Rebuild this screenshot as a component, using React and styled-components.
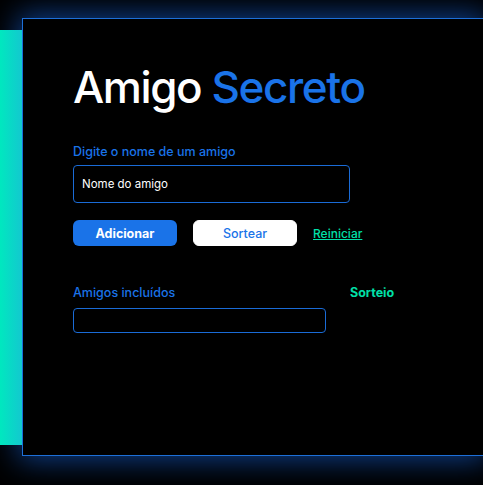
import React from "react";
import styled, { createGlobalStyle } from "styled-components";

const GlobalStyle = createGlobalStyle`
  html, body {
    margin: 0;
    background: #000;
    overflow: hidden;
  }
  body {
    font-family: Inter, "Liberation Sans", sans-serif;
  }
`;

export default function App() {
  return (
    <>
      <GlobalStyle />
      <Stage>
        <TealStrip />
        <Panel>
          <Title>
            Amigo <Highlight>Secreto</Highlight>
          </Title>
          <Label>Digite o nome de um amigo</Label>
          <NameInput placeholder="Nome do amigo" />
          <Actions>
            <PrimaryButton>Adicionar</PrimaryButton>
            <SecondaryButton>Sortear</SecondaryButton>
            <ResetLink href="#">Reiniciar</ResetLink>
          </Actions>
          <Results>
            <FriendsColumn>
              <Label>Amigos incluídos</Label>
              <FriendsList />
            </FriendsColumn>
            <DrawTitle>Sorteio</DrawTitle>
          </Results>
        </Panel>
      </Stage>
    </>
  );
}

const Stage = styled.div`
  display: flex;
  align-items: flex-start;
  width: 100%;
  height: 485px;
  padding-top: 18px;
  box-sizing: border-box;
`;

const TealStrip = styled.div`
  position: relative;
  z-index: 1;
  flex: none;
  width: 22px;
  height: 415px;
  margin-top: 12px;
  background: linear-gradient(90deg, #00e8bf 0%, #13c8cf 100%);
`;

const Panel = styled.div`
  flex: 1;
  min-width: 0;
  height: 438px;
  box-sizing: border-box;
  background: #000;
  border: 1px solid #1d6fd8;
  border-right: none;
  box-shadow: 0 0 28px 4px rgba(22, 96, 210, 0.65);
  padding: 42px 0 0 50px;
  display: flex;
  flex-direction: column;
  align-items: flex-start;
`;

const Title = styled.h1`
  margin: 0 0 31px;
  font-size: 44px;
  font-weight: 500;
  line-height: 52px;
  color: #fff;
  letter-spacing: -1.4px;
  white-space: nowrap;
`;

const Highlight = styled.span`
  color: #1a73e8;
`;

const Label = styled.div`
  font-size: 12.5px;
  font-weight: 500;
  line-height: 16px;
  color: #1a73e8;
  margin-bottom: 5px;
`;

const NameInput = styled.input`
  width: 277px;
  height: 38px;
  box-sizing: border-box;
  background: #000;
  border: 1px solid #1a6bd6;
  border-radius: 4px;
  padding: 0 8px;
  font-family: inherit;
  font-size: 11.5px;
  color: #fff;
  outline: none;
  &::placeholder {
    color: #fff;
    opacity: 1;
  }
`;

const Actions = styled.div`
  display: flex;
  align-items: center;
  gap: 16px;
  margin-top: 17px;
`;

const Button = styled.button`
  width: 104px;
  height: 26px;
  border-radius: 6px;
  font-family: inherit;
  font-size: 12.5px;
  cursor: pointer;
`;

const PrimaryButton = styled(Button)`
  background: #1a73e8;
  color: #fff;
  border: none;
  font-weight: 700;
`;

const SecondaryButton = styled(Button)`
  background: #fff;
  color: #1a73e8;
  border: 1px solid #fff;
  font-weight: 500;
`;

const ResetLink = styled.a`
  color: #00e0a8;
  font-size: 12px;
  font-weight: 500;
  text-decoration: underline;
`;

const Results = styled.div`
  display: flex;
  gap: 24px;
  margin-top: 39px;
`;

const FriendsColumn = styled.div`
  display: flex;
  flex-direction: column;
`;

const FriendsList = styled.div`
  width: 253px;
  height: 25px;
  margin-top: 2px;
  box-sizing: border-box;
  border: 1px solid #1a6bd6;
  border-radius: 4px;
`;

const DrawTitle = styled.div`
  font-size: 12.5px;
  font-weight: 700;
  line-height: 16px;
  color: #00e0a8;
`;
